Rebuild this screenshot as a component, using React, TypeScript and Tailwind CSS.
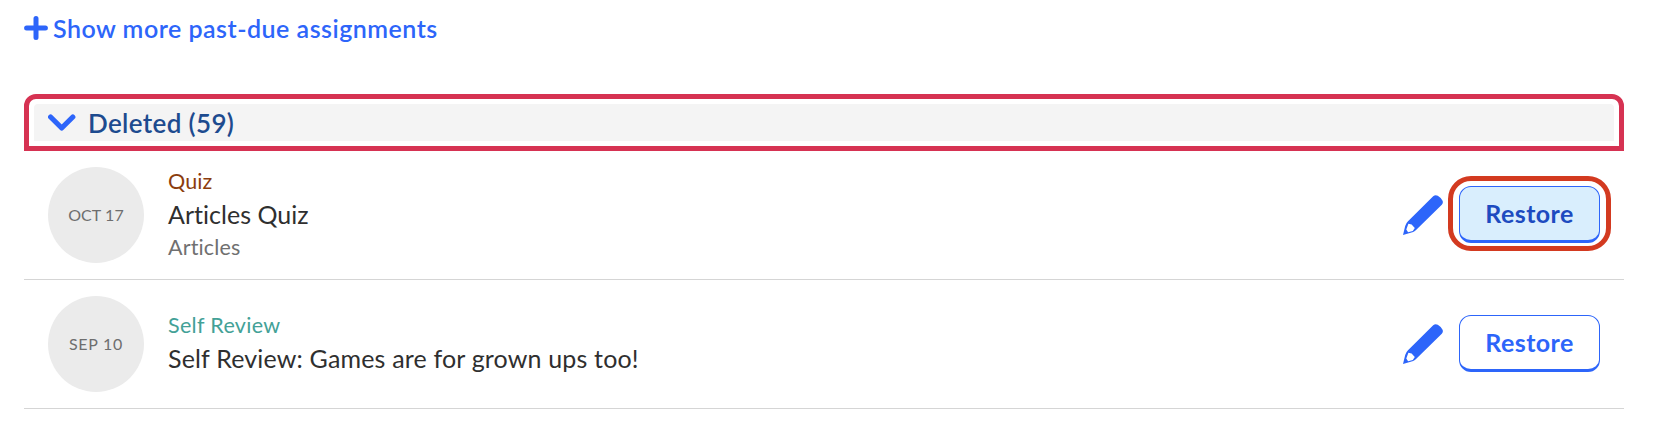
const font = "font-['Lato','Liberation_Sans',sans-serif]";

function Pencil() {
  return (
    <svg viewBox="0 0 40 40" className="size-10 shrink-0" fill="#2d65fa" fillRule="evenodd">
      <path d="M0 40 L2.2 31 Q2.8 28.3 5 26.2 L30.2 1.3 Q32.3 -.7 34.8 .8 Q37.8 2.6 39.4 5.5 Q40.6 7.6 38.8 9.7 L13.3 34.8 Q12 36.2 10.2 36.9 Z M5.4 28.7 L3.3 34.6 L5.1 37.3 L9.8 36.1 L11.8 33.1 L8.6 29.6 Z" />
    </svg>
  );
}

type RowProps = {
  date: string;
  dateClass: string;
  kind: string;
  kindClass: string;
  title: string;
  titleClass: string;
  detail?: string;
  active?: boolean;
};

function Row({ date, dateClass, kind, kindClass, title, titleClass, detail, active }: RowProps) {
  return (
    <div className="flex h-[129px] items-center border-b border-[#d5d5d5] px-6">
      <div className="flex size-24 shrink-0 items-center justify-center rounded-full bg-[#ebebeb] text-[16px] text-[#6e6e6e]">
        <span className={dateClass}>{date}</span>
      </div>
      <div className={`ml-6 flex-1 whitespace-nowrap ${detail ? "mb-0.5" : "mb-1"}`}>
        <div className={`text-[21.5px] leading-[33px] ${kindClass}`}>{kind}</div>
        <div className={`text-[25px] leading-[33px] text-[#2f2f2f] ${titleClass}`}>{title}</div>
        {detail && <div className="text-[21.5px] leading-[33px] tracking-[0.15px] text-[#707070]">{detail}</div>}
      </div>
      <Pencil />
      <button
        className={`relative mb-px ml-4 h-[57px] w-[141px] rounded-xl border border-b-[3px] border-[#2d65fa] text-[25px] leading-none font-bold tracking-[0.43px] ${
          active ? "bg-[#d9eefd] text-[#1d4bc0]" : "bg-white text-[#2d65fa]"
        }`}
      >
        Restore
        {active && (
          <span className="absolute -top-[11px] -right-3 -bottom-[11px] -left-3 rounded-[23px] border-[5px] border-[#d33a20]" />
        )}
      </button>
    </div>
  );
}

export default function App() {
  return (
    <main className={`h-[424px] w-[1654px] overflow-hidden bg-white pr-[30px] pl-6 ${font}`}>
      <a className="flex h-[94px] items-start pt-3 text-[#2d65fa]">
        <svg viewBox="0 0 24 24" className="mt-1 size-6 shrink-0" stroke="#2d65fa" strokeWidth="5" strokeLinecap="round">
          <path d="M12 2.6V21.4M2.6 12H21.4" />
        </svg>
        <span className="ml-[5px] text-[25px] leading-8 font-semibold tracking-[0.5px]">Show more past-due assignments</span>
      </a>
      <h2 className="h-[57px] rounded-t-xl border-[5px] border-[#d63252] p-[5px]">
        <span className="flex h-[37px] items-center rounded-t-sm bg-[#f4f4f4] pl-3.5 text-[#1d4b8f]">
          <svg viewBox="0 0 28 18" className="h-[18px] w-7 shrink-0" fill="none" stroke="#2d65fa" strokeWidth="5.2" strokeLinecap="round" strokeLinejoin="round">
            <path d="M2.6 3L13.7 14L24.8 3" />
          </svg>
          <span className="ml-3 text-[26px] leading-8 font-semibold tracking-[0.35px]">Deleted (59)</span>
        </span>
      </h2>
      <Row
        date="OCT 17"
        dateClass="tracking-[0.1px]"
        kind="Quiz"
        kindClass="tracking-[0.1px] text-[#8b3d0e]"
        title="Articles Quiz"
        titleClass="tracking-[0.03px]"
        detail="Articles"
        active
      />
      <Row
        date="SEP 10"
        dateClass="tracking-[0.75px]"
        kind="Self Review"
        kindClass="tracking-[0.33px] text-[#43a197]"
        title="Self Review: Games are for grown ups too!"
        titleClass="tracking-[0.17px]"
      />
    </main>
  );
}
